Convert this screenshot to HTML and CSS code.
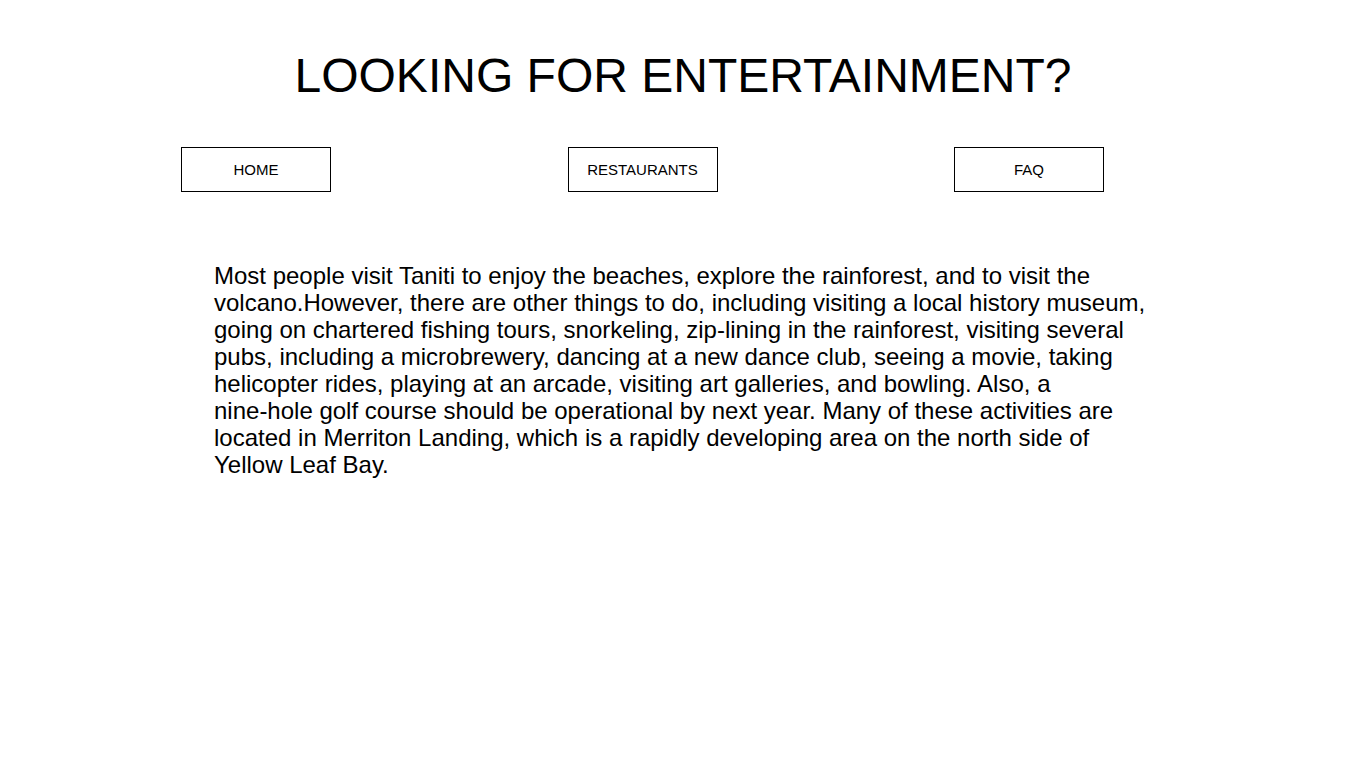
FILE: index.html
```html
<!DOCTYPE html>
<html>
<head>
<meta charset="utf-8">
<title>Entertainment</title>
<link rel="stylesheet" href="styles.css">
</head>
<body>
<h1 class="title">LOOKING FOR ENTERTAINMENT?</h1>
<nav class="nav">
  <a class="nav-btn" href="#">HOME</a>
  <a class="nav-btn" href="#">RESTAURANTS</a>
  <a class="nav-btn" href="#">FAQ</a>
</nav>
<main class="content">
  <p class="intro">Most people visit Taniti to enjoy the beaches, explore the rainforest, and to visit the volcano.However, there are other things to do, including visiting a local history museum, going on chartered fishing tours, snorkeling, zip-lining in the rainforest, visiting several pubs, including a microbrewery, dancing at a new dance club, seeing a movie, taking helicopter rides, playing at an arcade, visiting art galleries, and bowling. Also, a <span class="nowrap">nine-hole</span> golf course should be operational by next year. Many of these activities are located in Merriton Landing, which is a rapidly developing area on the north side of Yellow Leaf Bay.</p>
</main>
</body>
</html>
```
FILE: styles.css
```css
html, body {
  margin: 0;
  padding: 0;
  background: #fff;
  color: #000;
  font-family: "Liberation Sans", Arial, sans-serif;
}
.title {
  margin: 0;
  padding-top: 47px;
  text-align: center;
  font-size: 48px;
  font-weight: normal;
  line-height: 58px;
}
.nav {
  display: flex;
  justify-content: space-between;
  width: 923px;
  margin: 42px 0 0 181px;
}
.nav-btn {
  box-sizing: border-box;
  width: 150px;
  height: 45px;
  border: 1px solid #000;
  display: flex;
  align-items: center;
  justify-content: center;
  color: #000;
  text-decoration: none;
  font-size: 15px;
}
.content {
  width: 938px;
  margin: 0 auto;
  padding-top: 70px;
}
.intro {
  margin: 0;
  font-size: 24px;
  line-height: 27px;
}
.nowrap {
  white-space: nowrap;
}
```
